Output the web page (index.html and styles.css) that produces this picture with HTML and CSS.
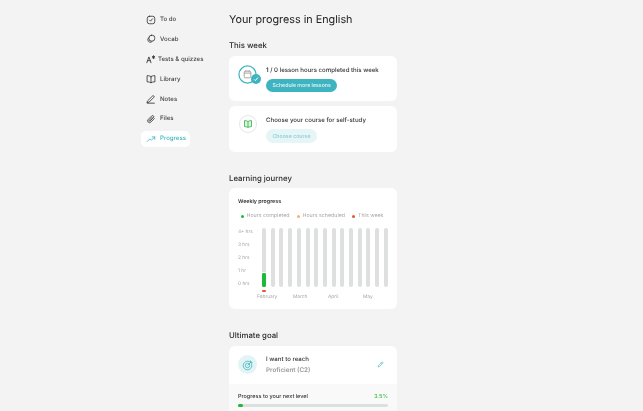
FILE: index.html
```html
<!DOCTYPE html>
<html lang="en">
<head>
    <meta charset="UTF-8">
    <meta name="viewport" content="width=device-width, initial-scale=1.0">
    <title>Your progress in English</title>
    <link rel="stylesheet" href="styles.css">
</head>
<body>
    <div class="layout">
        <nav class="sidebar">
            <a class="nav-item">
                <svg class="nav-icon" viewBox="0 0 12 12"><rect x="1.5" y="1.5" width="9" height="9" rx="2.5"/><path d="M4.3 6.2l1.2 1.2 2.2-2.8"/></svg>
                <span>To do</span>
            </a>
            <a class="nav-item">
                <svg class="nav-icon" viewBox="0 0 12 12"><path d="M3.5 4.2a3 3 0 1 0 3.6 5.2"/><rect x="3.5" y="1.5" width="7" height="7" rx="3"/></svg>
                <span>Vocab</span>
            </a>
            <a class="nav-item nav-tests">
                <svg class="nav-icon" viewBox="0 0 12 12"><path d="M1 10.5L3.5 3.5 6 10.5M1.900 8h3.200"/><path d="M9 2v3.600M7.500 2.900l3 1.800M10.500 2.900l-3 1.800"/></svg>
                <span>Tests &amp; quizzes</span>
            </a>
            <a class="nav-item">
                <svg class="nav-icon" viewBox="0 0 12 12"><path d="M6 3.200C5 2.300 3.300 2 1.300 2v7.400c2 0 3.700.3 4.700 1.100 1-.8 2.700-1.100 4.700-1.100V2C8.700 2 7 2.300 6 3.200zM6 3.200v7.300"/></svg>
                <span>Library</span>
            </a>
            <a class="nav-item">
                <svg class="nav-icon" viewBox="0 0 12 12"><path d="M2 8.200L7.800 2.400a1.100 1.100 0 0 1 1.600 1.600L3.600 9.800 1.600 10.200zM1.500 11h8.500"/></svg>
                <span>Notes</span>
            </a>
            <a class="nav-item">
                <svg class="nav-icon" viewBox="0 0 12 12"><path d="M10 5.500L5.800 9.700a2.200 2.200 0 0 1-3.200-3.100l4.300-4.300a1.400 1.400 0 0 1 2 2L4.800 8.400a.6.6 0 0 1-.9-.9L7.700 3.700"/></svg>
                <span>Files</span>
            </a>
            <a class="nav-item active">
                <svg class="nav-icon" viewBox="0 0 12 12"><path d="M1.500 9l3.200-3.200 1.800 1.700 4-4M7.500 3.500h3v3"/></svg>
                <span>Progress</span>
            </a>
        </nav>

        <main class="content">
            <h1>Your progress in English</h1>

            <h2>This week</h2>
            <div class="card row-card">
                <div class="ring-icon">
                    <svg viewBox="0 0 20 20" class="ring-svg"><circle cx="10" cy="10" r="9"/><rect class="ring-cal" x="6.500" y="6.500" width="7" height="7" rx="1.500"/><path class="ring-cal" d="M6.500 8.500h7M8.300 5.500v1.500M11.700 5.500v1.500"/></svg>
                    <span class="check-badge">
                        <svg viewBox="0 0 8 8"><path d="M2.500 4.300l1 1 2-2.500"/></svg>
                    </span>
                </div>
                <div class="row-body">
                    <p class="row-title"><b>1</b> / 0 lesson hours completed this week</p>
                    <button class="btn btn-solid">Schedule more lessons</button>
                </div>
            </div>
            <div class="card row-card">
                <div class="book-icon">
                    <svg viewBox="0 0 10 10"><path d="M5 2.500C4 1.800 2.800 1.600 1.500 1.600v6c1.300 0 2.500.2 3.500.9 1-.7 2.200-.9 3.500-.9v-6C7.200 1.600 6 1.800 5 2.500zM5 2.500v6"/></svg>
                </div>
                <div class="row-body">
                    <p class="row-title">Choose your course for self-study</p>
                    <button class="btn btn-pale">Choose course</button>
                </div>
            </div>

            <h2 class="section-gap">Learning journey</h2>
            <div class="card chart-card">
                <h3>Weekly progress</h3>
                <div class="legend">
                    <span class="legend-item"><i class="dot green"></i>Hours completed</span>
                    <span class="legend-item"><i class="dot peach"></i>Hours scheduled</span>
                    <span class="legend-item"><i class="dot red"></i>This week</span>
                </div>
                <div class="chart">
                    <div class="y-axis">
                        <span>4+ hrs</span>
                        <span>3 hrs</span>
                        <span>2 hrs</span>
                        <span>1 hr</span>
                        <span>0 hrs</span>
                    </div>
                    <div class="plot">
                        <div class="bars">
                            <div class="bar current"><div class="bar-fill" style="height: 24%"></div></div>
                            <div class="bar"></div>
                            <div class="bar"></div>
                            <div class="bar"></div>
                            <div class="bar"></div>
                            <div class="bar"></div>
                            <div class="bar"></div>
                            <div class="bar"></div>
                            <div class="bar"></div>
                            <div class="bar"></div>
                            <div class="bar"></div>
                            <div class="bar"></div>
                            <div class="bar"></div>
                            <div class="bar"></div>
                            <div class="bar"></div>
                        </div>
                        <div class="months">
                            <span>February</span>
                            <span>March</span>
                            <span>April</span>
                            <span>May</span>
                        </div>
                    </div>
                </div>
            </div>

            <h2 class="section-gap">Ultimate goal</h2>
            <div class="card goal-card">
                <div class="goal-top">
                    <div class="goal-icon">
                        <svg viewBox="0 0 12 12"><circle cx="5.500" cy="6.500" r="4.300"/><circle cx="5.500" cy="6.500" r="2.200"/><path d="M5.500 6.500L9.500 2.500M8.500 1.500v2h2"/></svg>
                    </div>
                    <div class="goal-text">
                        <p class="row-title">I want to reach</p>
                        <p class="goal-level">Proficient (C2)</p>
                    </div>
                    <svg class="edit-icon" viewBox="0 0 10 10"><path d="M1.500 8.500l.5-2L6.800 1.700a.9.9 0 0 1 1.400 1.400L3.500 8zM5.900 2.600l1.400 1.400"/></svg>
                </div>
                <div class="goal-bottom">
                    <div class="goal-label">
                        <span>Progress to your next level</span>
                        <span class="percent">3.5%</span>
                    </div>
                    <div class="level-track"><div class="level-fill" style="width: 3.5%"></div></div>
                </div>
            </div>
        </main>
    </div>
</body>
</html>
```

FILE: styles.css
```css
html, body {
    height: 100%;
}
body {
    font-family: 'Inter', 'Liberation Sans', sans-serif;
    background: #f3f3f3;
    color: #2c2c2c;
    margin: 0;
    overflow: hidden;
    text-rendering: geometricPrecision;
}
p {
    margin: 0;
}
.layout {
    display: flex;
    align-items: flex-start;
    padding-left: 141px;
    transform: translateZ(0);
}
.sidebar {
    width: 88px;
    flex-shrink: 0;
    display: flex;
    flex-direction: column;
    gap: 3.9px;
    padding-top: 11.5px;
}
.nav-item {
    display: flex;
    align-items: center;
    gap: 4px;
    width: 49px;
    height: 16px;
    padding-left: 5px;
    box-sizing: border-box;
    font-size: 6.1px;
    font-weight: 500;
    color: #444;
    white-space: nowrap;
    border-radius: 5px;
}
.nav-tests {
    gap: 2px;
}
.nav-item.active {
    color: #3eb4c0;
    background: #fff;
}
.nav-icon {
    width: 10px;
    height: 10px;
    flex-shrink: 0;
    fill: none;
    stroke: #333;
    stroke-width: 1;
    stroke-linecap: round;
    stroke-linejoin: round;
}
.active .nav-icon {
    stroke: #3eb4c0;
}
.content {
    width: 168px;
    flex-shrink: 0;
    padding-top: 9px;
}
h1 {
    font-size: 10.8px;
    font-weight: 400;
    line-height: 20px;
    margin: 0 0 9.5px 0;
    color: #222;
    padding-top: .5px;
}
h2 {
    font-size: 7.8px;
    font-weight: 500;
    line-height: 12px;
    margin: 0 0 4.5px 0;
    color: #2c2c2c;
}
.section-gap {
    margin-top: 20px;
}
.card {
    background: #fff;
    border-radius: 6px;
    margin-bottom: 5px;
}
.row-card {
    display: flex;
    height: 45.5px;
    box-sizing: border-box;
    padding: 9px 0 0 9px;
    gap: 9px;
}
.ring-icon {
    position: relative;
    width: 19px;
    height: 19px;
    flex-shrink: 0;
}
.ring-svg {
    width: 19px;
    height: 19px;
    fill: none;
    stroke: #3eb4c0;
    stroke-width: 1.3;
}
.ring-svg .ring-cal {
    stroke: #8a8a8a;
    stroke-width: .8;
}
.check-badge {
    position: absolute;
    right: -4px;
    bottom: 0;
    width: 10px;
    height: 10px;
    border-radius: 50%;
    background: #3eb4c0;
    display: flex;
}
.check-badge svg {
    fill: none;
    stroke: #fff;
    stroke-width: .8;
}
.book-icon {
    width: 18px;
    height: 18px;
    flex-shrink: 0;
    box-sizing: border-box;
    border: 1px solid #e6e6e6;
    border-radius: 50%;
    padding: 3px;
    margin-left: 1px;
    display: flex;
}
.book-icon svg {
    fill: #d9f3dc;
    stroke: #2fb24a;
    stroke-width: .8;
}
.row-body {
    padding-top: 1px;
}
.row-title {
    font-size: 6.1px;
    font-weight: 500;
    line-height: 9px;
    color: #333;
    white-space: nowrap;
}
.row-title b {
    font-weight: 600;
}
.btn {
    display: block;
    border: none;
    border-radius: 7px;
    height: 13.5px;
    padding: 0 6.5px;
    margin-top: 4px;
    font-family: inherit;
    font-size: 5.25px;
    font-weight: 500;
}
.btn-solid {
    background: #3eb4c0;
    color: #e4f6f8;
}
.btn-pale {
    background: #e6f5f6;
    color: #8ccdd4;
}
.chart-card {
    height: 121px;
    box-sizing: border-box;
    padding: 10px 9px 0 9px;
}
h3 {
    font-size: 5.3px;
    font-weight: 600;
    line-height: 8px;
    margin: 0 0 6px 0;
    color: #333;
}
.legend {
    display: flex;
    gap: 7px;
    padding-left: 2.5px;
    font-size: 5.3px;
    line-height: 8px;
    color: #a6a6a6;
    white-space: nowrap;
}
.legend-item {
    display: flex;
    align-items: center;
    gap: 3px;
}
.dot {
    width: 3px;
    height: 3px;
    border-radius: 50%;
}
.green { background: #1fb93b; }
.peach { background: #f4b27c; }
.red { background: #e8552f; }
.chart {
    display: flex;
    margin-top: 8px;
}
.y-axis {
    width: 24px;
    height: 58px;
    margin-top: 1px;
    flex-shrink: 0;
    display: flex;
    flex-direction: column;
    justify-content: space-between;
    font-size: 4.8px;
    line-height: 6px;
    color: #a6a6a6;
    white-space: nowrap;
}
.plot {
    flex: 1;
    min-width: 0;
}
.bars {
    display: flex;
    justify-content: space-between;
    height: 59px;
}
.bar {
    position: relative;
    width: 4px;
    height: 100%;
    background: #dde0df;
    border-radius: 2px;
    display: flex;
    align-items: flex-end;
}
.bar-fill {
    width: 100%;
    background: #1fb93b;
    border-radius: 1px;
    outline: 1px solid #fff;
}
.current::after {
    content: "";
    position: absolute;
    left: 0;
    top: 61.5px;
    width: 4px;
    height: 2.5px;
    border-radius: 1px;
    background: #e8552f;
}
.months {
    display: flex;
    padding-top: 7px;
    margin-left: -5px;
    font-size: 4.8px;
    line-height: 7px;
    color: #a6a6a6;
}
.months span {
    flex: none;
    width: 35px;
}
.months span:first-child {
    width: 36px;
}
.goal-card {
    overflow: hidden;
    margin-bottom: 0;
}
.goal-top {
    display: flex;
    align-items: center;
    height: 38px;
    padding: 0 13px 0 9px;
    gap: 9px;
}
.goal-icon {
    width: 19px;
    height: 19px;
    flex-shrink: 0;
    box-sizing: border-box;
    padding: 3.5px;
    border-radius: 50%;
    background: #e3f4f5;
    display: flex;
}
.goal-icon svg {
    fill: none;
    stroke: #3eb4c0;
    stroke-width: .8;
}
.goal-text {
    flex: 1;
}
.goal-level {
    font-size: 6.3px;
    font-weight: 600;
    line-height: 9px;
    margin-top: 2px;
    color: #9a9a9a;
}
.edit-icon {
    width: 7px;
    height: 7px;
    fill: none;
    stroke: #3eb4c0;
    stroke-width: .9;
}
.goal-bottom {
    background: #f9f9f9;
    height: 40px;
    padding: 10px 9px 0 9px;
    box-sizing: border-box;
}
.goal-label {
    display: flex;
    justify-content: space-between;
    font-size: 5.5px;
    font-weight: 500;
    line-height: 7px;
    color: #333;
}
.percent {
    color: #4cc35f;
    font-weight: 600;
}
.level-track {
    height: 3px;
    margin-top: 3px;
    background: #dde0df;
    border-radius: 2px;
}
.level-fill {
    height: 100%;
    background: #1fb93b;
    border-radius: 2px;
}
```
